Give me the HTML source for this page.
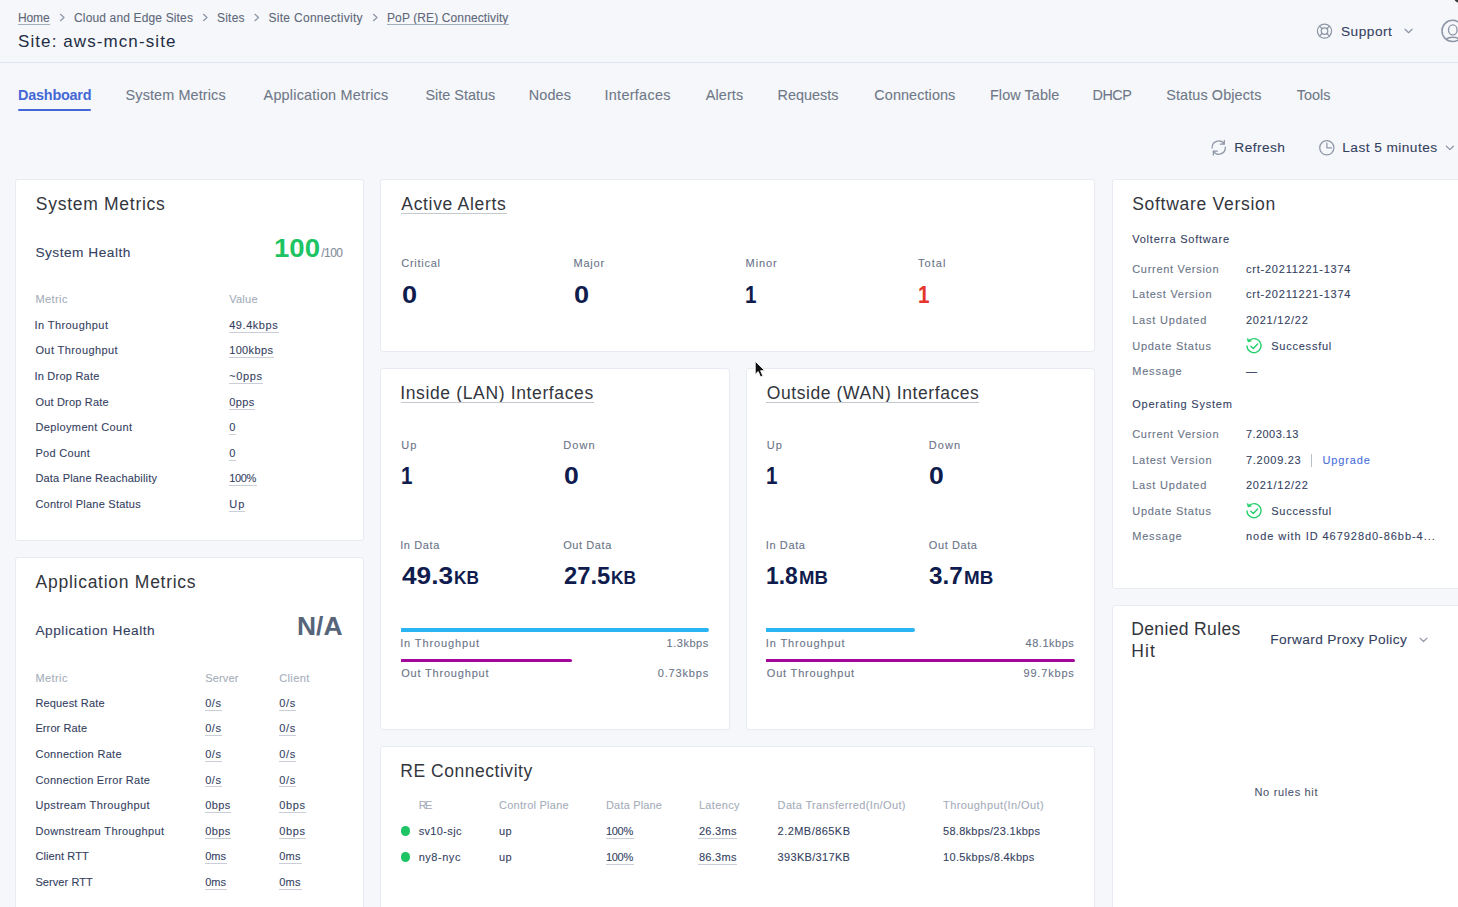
<!DOCTYPE html>
<html lang="en"><head><meta charset="utf-8"><title>Site: aws-mcn-site</title>
<style>
html,body{margin:0;padding:0;}
body{width:1458px;height:907px;overflow:hidden;background:#f5f7fa;font-family:"Liberation Sans",Arial,sans-serif;}
#root{position:relative;width:1458px;height:907px;overflow:hidden;}
.t{position:absolute;white-space:pre;line-height:1;}
.u{position:absolute;height:1px;display:block;}
.card{position:absolute;background:#fff;border:1px solid #e8ebf1;border-radius:3px;box-sizing:border-box;}
.bar{position:absolute;height:3.6px;border-radius:0.5px 2px 2px 0.5px;}
.dot{position:absolute;width:9.6px;height:9.6px;border-radius:50%;background:#1dc463;}
svg{position:absolute;overflow:visible;}
.k{-webkit-text-stroke:0.1px currentColor;}

</style></head>
<body>
<div id="root">
<div style="position:absolute;left:0;top:62px;width:1458px;height:1px;background:#dfe5ee"></div>
<div style="position:absolute;left:18px;top:109px;width:73px;height:2px;background:#4367d6;border-radius:1px"></div>
<div class="card" style="left:15px;top:179px;width:349px;height:362px"></div>
<div class="card" style="left:15px;top:557px;width:349px;height:380px"></div>
<div class="card" style="left:380px;top:179px;width:715px;height:173px"></div>
<div class="card" style="left:380px;top:368px;width:350px;height:362px"></div>
<div class="card" style="left:746px;top:368px;width:349px;height:362px"></div>
<div class="card" style="left:380px;top:746px;width:715px;height:200px"></div>
<div class="card" style="left:1112px;top:179px;width:380px;height:410px"></div>
<div class="card" style="left:1112px;top:605px;width:380px;height:340px"></div>
<div class="bar" style="left:400.8px;top:628.2px;width:308.4px;background:#2ab4f4"></div>
<div class="bar" style="left:400.8px;top:658.7px;width:171.6px;background:#a3069c"></div>
<div class="bar" style="left:766.4px;top:628.2px;width:148.8px;background:#2ab4f4"></div>
<div class="bar" style="left:766.4px;top:658.7px;width:308.4px;background:#a3069c"></div>
<div class="dot" style="left:400.8px;top:826.3px"></div>
<div class="dot" style="left:400.8px;top:852.2px"></div>
<div style="position:absolute;left:1310.5px;top:454px;width:1px;height:13px;background:#b9c0cc"></div>
<!-- breadcrumb chevrons -->
<svg style="left:0;top:0" width="1458" height="180" viewBox="0 0 1458 180" fill="none" stroke="#8e97a7" stroke-width="1.25" stroke-linecap="round" stroke-linejoin="round">
<path d="M60.5 14.3l3.5 3.2-3.5 3.2M203.5 14.3l3.5 3.2-3.5 3.2M255 14.3l3.5 3.2-3.5 3.2M373.5 14.3l3.5 3.2-3.5 3.2"/>
<!-- support lifebuoy -->
<circle cx="1324.5" cy="31.1" r="7.1"/><circle cx="1324.5" cy="31.1" r="3.3"/>
<path d="M1319.5 26.1l2.6 2.6M1329.5 26.1l-2.6 2.6M1319.5 36.1l2.6-2.6M1329.5 36.1l-2.6-2.6"/>
<path d="M1405.1 29.3l3.5 3.4 3.5-3.4"/>
<!-- user -->
<circle cx="1452.6" cy="30.9" r="10.6" stroke-width="1.5"/>
<ellipse cx="1452.8" cy="29.9" rx="4.3" ry="5" stroke-width="1.4"/>
<path d="M1446.6 39.4c0.9-1.4 3.2-2.1 6.2-2.1s5.300 0.700 6.200 2.100" stroke-width="1.4"/>
<!-- refresh -->
<path d="M1212.1 148A6.6 6.6 0 0 1 1224.2 144M1224.3 140.3V144.2H1220.3M1225.3 147.2A6.6 6.6 0 0 1 1213.2 151.2M1213.3 155.1V151H1217.4"/>
<!-- clock -->
<circle cx="1326.8" cy="147.8" r="7.1"/>
<path d="M1326.9 143.2v4.7h4.6"/>
<path d="M1446.4 146.2l3.5 3.4 3.5-3.4"/>
</svg>
<!-- denied rules chevron -->
<svg style="left:1415px;top:632px" width="18" height="16" viewBox="0 0 18 16" fill="none" stroke="#8e97a7" stroke-width="1.25" stroke-linecap="round" stroke-linejoin="round"><path d="M5 6.1l3.5 3.4 3.5-3.4"/></svg>
<!-- success icons -->
<svg style="left:1243.7px;top:335.6px" width="20" height="20" viewBox="0 0 20 20" fill="none" stroke="#27cf6e" stroke-width="1.4" stroke-linecap="round" stroke-linejoin="round"><path d="M4.6 5.2A7 7 0 1 1 3 9.9"/><path d="M3.3 2.9l0.9 3 2.9-0.9z" fill="#27cf6e" stroke-width="0.8"/><path d="M6.8 10.2l2.5 2.4 4.3-4.6"/></svg>
<svg style="left:1243.7px;top:500.7px" width="20" height="20" viewBox="0 0 20 20" fill="none" stroke="#27cf6e" stroke-width="1.4" stroke-linecap="round" stroke-linejoin="round"><path d="M4.6 5.2A7 7 0 1 1 3 9.9"/><path d="M3.3 2.9l0.9 3 2.9-0.9z" fill="#27cf6e" stroke-width="0.8"/><path d="M6.8 10.2l2.5 2.4 4.3-4.6"/></svg>
<!-- cursor -->
<svg style="left:754px;top:360px" width="14" height="20" viewBox="0 0 14 20"><path d="M1.2 1.2v13.2l3-2.8 2.3 5.3 2.4-1-2.3-5.2h4.2z" fill="#111" stroke="#fff" stroke-width="0.9" stroke-linejoin="round"/></svg>
<div style="position:absolute;left:1453.5px;top:-3.5px;width:7px;height:5px;background:#3a3a3a;border-radius:50%;transform:rotate(40deg)"></div>

<span class="t k" style="left:18.0px;top:12px;font-size:12px;color:#5f6879;letter-spacing:-0.11px;">Home</span>
<i class="u" style="left:18.0px;top:24.0px;width:32.0px;height:1.3px;background:#a4adbc"></i>
<span class="t k" style="left:74.0px;top:12px;font-size:12px;color:#5f6879;letter-spacing:0.15px;">Cloud and Edge Sites</span>
<span class="t k" style="left:217.0px;top:12px;font-size:12px;color:#5f6879;letter-spacing:0.21px;">Sites</span>
<span class="t k" style="left:268.5px;top:12px;font-size:12px;color:#5f6879;letter-spacing:0.29px;">Site Connectivity</span>
<span class="t k" style="left:387.0px;top:12px;font-size:12px;color:#5f6879;letter-spacing:0.11px;">PoP (RE) Connectivity</span>
<i class="u" style="left:387.0px;top:24.0px;width:121.5px;height:1.3px;background:#a4adbc"></i>
<span class="t" style="left:18.0px;top:33px;font-size:17px;color:#232c45;letter-spacing:1.09px;">Site: aws-mcn-site</span>
<span class="t k" style="left:1340.9px;top:25px;font-size:13.7px;color:#353f5f;letter-spacing:0.51px;">Support</span>
<span class="t" style="left:18.0px;top:88px;font-size:14.4px;color:#4367d6;font-weight:700;letter-spacing:-0.20px;">Dashboard</span>
<span class="t k" style="left:125.6px;top:88px;font-size:14.4px;color:#6f7888;letter-spacing:0.13px;">System Metrics</span>
<span class="t k" style="left:263.6px;top:88px;font-size:14.4px;color:#6f7888;letter-spacing:0.21px;">Application Metrics</span>
<span class="t k" style="left:425.4px;top:88px;font-size:14.4px;color:#6f7888;letter-spacing:0.02px;">Site Status</span>
<span class="t k" style="left:528.7px;top:88px;font-size:14.4px;color:#6f7888;letter-spacing:0.15px;">Nodes</span>
<span class="t k" style="left:604.5px;top:88px;font-size:14.4px;color:#6f7888;letter-spacing:0.30px;">Interfaces</span>
<span class="t k" style="left:705.8px;top:88px;font-size:14.4px;color:#6f7888;letter-spacing:0.12px;">Alerts</span>
<span class="t k" style="left:777.6px;top:88px;font-size:14.4px;color:#6f7888;">Requests</span>
<span class="t k" style="left:874.3px;top:88px;font-size:14.4px;color:#6f7888;letter-spacing:0.10px;">Connections</span>
<span class="t k" style="left:990.0px;top:88px;font-size:14.4px;color:#6f7888;letter-spacing:0.08px;">Flow Table</span>
<span class="t k" style="left:1092.5px;top:88px;font-size:14.4px;color:#6f7888;letter-spacing:-0.46px;">DHCP</span>
<span class="t k" style="left:1166.2px;top:88px;font-size:14.4px;color:#6f7888;letter-spacing:0.12px;">Status Objects</span>
<span class="t k" style="left:1296.7px;top:88px;font-size:14.4px;color:#6f7888;letter-spacing:0.03px;">Tools</span>
<span class="t k" style="left:1234.3px;top:141px;font-size:13.7px;color:#353f5f;letter-spacing:0.45px;">Refresh</span>
<span class="t k" style="left:1342.3px;top:141px;font-size:13.7px;color:#353f5f;letter-spacing:0.44px;">Last 5 minutes</span>
<span class="t" style="left:35.8px;top:196px;font-size:17.5px;color:#33363d;letter-spacing:0.72px;">System Metrics</span>
<span class="t k" style="left:35.4px;top:246px;font-size:13.7px;color:#353f5f;letter-spacing:0.50px;">System Health</span>
<span class="t" style="left:273.9px;top:235px;font-size:26px;color:#1dc463;font-weight:700;transform:scaleX(1.059);transform-origin:0 0;">100</span>
<span class="t k" style="left:321.2px;top:247px;font-size:12px;color:#868c9a;letter-spacing:-0.53px;">/100</span>
<span class="t k" style="left:35.4px;top:294px;font-size:11px;color:#a5adba;letter-spacing:0.41px;">Metric</span>
<span class="t k" style="left:229.2px;top:294px;font-size:11px;color:#a5adba;letter-spacing:0.25px;">Value</span>
<span class="t k" style="left:34.4px;top:320px;font-size:11px;color:#353f5f;letter-spacing:0.44px;">In Throughput</span>
<span class="t k" style="left:229.2px;top:320px;font-size:11px;color:#353f5f;letter-spacing:0.55px;">49.4kbps</span>
<i class="u" style="left:228.7px;top:331.7px;width:50.0px;background:#c9ced8"></i>
<span class="t k" style="left:35.4px;top:345px;font-size:11px;color:#353f5f;letter-spacing:0.41px;">Out Throughput</span>
<span class="t k" style="left:229.2px;top:345px;font-size:11px;color:#353f5f;letter-spacing:0.35px;">100kbps</span>
<i class="u" style="left:228.7px;top:357.3px;width:45.2px;background:#c9ced8"></i>
<span class="t k" style="left:34.4px;top:371px;font-size:11px;color:#353f5f;letter-spacing:0.24px;">In Drop Rate</span>
<span class="t k" style="left:229.2px;top:371px;font-size:11px;color:#353f5f;letter-spacing:0.63px;">~0pps</span>
<i class="u" style="left:228.7px;top:382.9px;width:34.3px;background:#c9ced8"></i>
<span class="t k" style="left:35.4px;top:397px;font-size:11px;color:#353f5f;letter-spacing:0.19px;">Out Drop Rate</span>
<span class="t k" style="left:229.2px;top:397px;font-size:11px;color:#353f5f;letter-spacing:0.42px;">0pps</span>
<i class="u" style="left:228.7px;top:408.5px;width:26.6px;background:#c9ced8"></i>
<span class="t k" style="left:35.4px;top:422px;font-size:11px;color:#353f5f;letter-spacing:0.37px;">Deployment Count</span>
<span class="t k" style="left:229.2px;top:422px;font-size:11px;color:#353f5f;">0</span>
<i class="u" style="left:228.7px;top:434.1px;width:7.7px;background:#c9ced8"></i>
<span class="t k" style="left:35.4px;top:448px;font-size:11px;color:#353f5f;letter-spacing:0.30px;">Pod Count</span>
<span class="t k" style="left:229.2px;top:448px;font-size:11px;color:#353f5f;">0</span>
<i class="u" style="left:228.7px;top:459.7px;width:7.7px;background:#c9ced8"></i>
<span class="t k" style="left:35.4px;top:473px;font-size:11px;color:#353f5f;letter-spacing:0.19px;">Data Plane Reachability</span>
<span class="t k" style="left:229.2px;top:473px;font-size:11px;color:#353f5f;letter-spacing:-0.38px;">100%</span>
<i class="u" style="left:228.7px;top:485.3px;width:28.2px;background:#c9ced8"></i>
<span class="t k" style="left:35.4px;top:499px;font-size:11px;color:#353f5f;letter-spacing:0.23px;">Control Plane Status</span>
<span class="t k" style="left:229.2px;top:499px;font-size:11px;color:#353f5f;letter-spacing:1.06px;">Up</span>
<i class="u" style="left:228.7px;top:510.9px;width:16.0px;background:#c9ced8"></i>
<span class="t" style="left:35.6px;top:574px;font-size:17.5px;color:#33363d;letter-spacing:0.73px;">Application Metrics</span>
<span class="t k" style="left:35.4px;top:624px;font-size:13.7px;color:#353f5f;letter-spacing:0.53px;">Application Health</span>
<span class="t" style="left:297.3px;top:614px;font-size:25px;color:#57657a;font-weight:700;transform:scaleX(1.057);transform-origin:0 0;">N/A</span>
<span class="t k" style="left:35.4px;top:673px;font-size:11px;color:#a5adba;letter-spacing:0.41px;">Metric</span>
<span class="t k" style="left:205.2px;top:673px;font-size:11px;color:#a5adba;letter-spacing:0.17px;">Server</span>
<span class="t k" style="left:279.2px;top:673px;font-size:11px;color:#a5adba;letter-spacing:0.39px;">Client</span>
<span class="t k" style="left:35.4px;top:698px;font-size:11px;color:#353f5f;letter-spacing:0.17px;">Request Rate</span>
<span class="t k" style="left:205.2px;top:698px;font-size:11px;color:#353f5f;letter-spacing:0.51px;">0/s</span>
<i class="u" style="left:204.7px;top:709.6px;width:17.2px;background:#c9ced8"></i>
<span class="t k" style="left:279.2px;top:698px;font-size:11px;color:#353f5f;letter-spacing:0.71px;">0/s</span>
<i class="u" style="left:278.7px;top:709.6px;width:17.6px;background:#c9ced8"></i>
<span class="t k" style="left:35.4px;top:723px;font-size:11px;color:#353f5f;letter-spacing:0.11px;">Error Rate</span>
<span class="t k" style="left:205.2px;top:723px;font-size:11px;color:#353f5f;letter-spacing:0.51px;">0/s</span>
<i class="u" style="left:204.7px;top:735.2px;width:17.2px;background:#c9ced8"></i>
<span class="t k" style="left:279.2px;top:723px;font-size:11px;color:#353f5f;letter-spacing:0.71px;">0/s</span>
<i class="u" style="left:278.7px;top:735.2px;width:17.6px;background:#c9ced8"></i>
<span class="t k" style="left:35.4px;top:749px;font-size:11px;color:#353f5f;letter-spacing:0.30px;">Connection Rate</span>
<span class="t k" style="left:205.2px;top:749px;font-size:11px;color:#353f5f;letter-spacing:0.51px;">0/s</span>
<i class="u" style="left:204.7px;top:760.8px;width:17.2px;background:#c9ced8"></i>
<span class="t k" style="left:279.2px;top:749px;font-size:11px;color:#353f5f;letter-spacing:0.71px;">0/s</span>
<i class="u" style="left:278.7px;top:760.8px;width:17.6px;background:#c9ced8"></i>
<span class="t k" style="left:35.4px;top:775px;font-size:11px;color:#353f5f;letter-spacing:0.25px;">Connection Error Rate</span>
<span class="t k" style="left:205.2px;top:775px;font-size:11px;color:#353f5f;letter-spacing:0.51px;">0/s</span>
<i class="u" style="left:204.7px;top:786.4px;width:17.2px;background:#c9ced8"></i>
<span class="t k" style="left:279.2px;top:775px;font-size:11px;color:#353f5f;letter-spacing:0.71px;">0/s</span>
<i class="u" style="left:278.7px;top:786.4px;width:17.6px;background:#c9ced8"></i>
<span class="t k" style="left:35.4px;top:800px;font-size:11px;color:#353f5f;letter-spacing:0.41px;">Upstream Throughput</span>
<span class="t k" style="left:205.2px;top:800px;font-size:11px;color:#353f5f;letter-spacing:0.38px;">0bps</span>
<i class="u" style="left:204.7px;top:812.0px;width:26.5px;background:#c9ced8"></i>
<span class="t k" style="left:279.2px;top:800px;font-size:11px;color:#353f5f;letter-spacing:0.65px;">0bps</span>
<i class="u" style="left:278.7px;top:812.0px;width:27.3px;background:#c9ced8"></i>
<span class="t k" style="left:35.4px;top:826px;font-size:11px;color:#353f5f;letter-spacing:0.39px;">Downstream Throughput</span>
<span class="t k" style="left:205.2px;top:826px;font-size:11px;color:#353f5f;letter-spacing:0.38px;">0bps</span>
<i class="u" style="left:204.7px;top:837.6px;width:26.5px;background:#c9ced8"></i>
<span class="t k" style="left:279.2px;top:826px;font-size:11px;color:#353f5f;letter-spacing:0.65px;">0bps</span>
<i class="u" style="left:278.7px;top:837.6px;width:27.3px;background:#c9ced8"></i>
<span class="t k" style="left:35.4px;top:851px;font-size:11px;color:#353f5f;letter-spacing:0.11px;">Client RTT</span>
<span class="t k" style="left:205.2px;top:851px;font-size:11px;color:#353f5f;letter-spacing:0.06px;">0ms</span>
<i class="u" style="left:204.7px;top:863.2px;width:22.4px;background:#c9ced8"></i>
<span class="t k" style="left:279.2px;top:851px;font-size:11px;color:#353f5f;letter-spacing:0.31px;">0ms</span>
<i class="u" style="left:278.7px;top:863.2px;width:22.9px;background:#c9ced8"></i>
<span class="t k" style="left:35.4px;top:877px;font-size:11px;color:#353f5f;letter-spacing:0.09px;">Server RTT</span>
<span class="t k" style="left:205.2px;top:877px;font-size:11px;color:#353f5f;letter-spacing:0.06px;">0ms</span>
<i class="u" style="left:204.7px;top:888.8px;width:22.4px;background:#c9ced8"></i>
<span class="t k" style="left:279.2px;top:877px;font-size:11px;color:#353f5f;letter-spacing:0.31px;">0ms</span>
<i class="u" style="left:278.7px;top:888.8px;width:22.9px;background:#c9ced8"></i>
<span class="t" style="left:401.3px;top:196px;font-size:17.5px;color:#33363d;letter-spacing:0.68px;">Active Alerts</span>
<i class="u" style="left:400.8px;top:213.0px;width:106.7px;background:#c4c8cf"></i>
<span class="t k" style="left:401.3px;top:258px;font-size:11px;color:#6a7487;letter-spacing:0.72px;">Critical</span>
<span class="t k" style="left:573.5px;top:258px;font-size:11px;color:#6a7487;letter-spacing:0.79px;">Major</span>
<span class="t k" style="left:745.6px;top:258px;font-size:11px;color:#6a7487;letter-spacing:0.89px;">Minor</span>
<span class="t k" style="left:918.1px;top:258px;font-size:11px;color:#6a7487;letter-spacing:1.03px;">Total</span>
<span class="t" style="left:401.8px;top:283px;font-size:24px;color:#0f1c4d;font-weight:700;transform:scaleX(1.131);transform-origin:0 0;">0</span>
<span class="t" style="left:574.0px;top:283px;font-size:24px;color:#0f1c4d;font-weight:700;transform:scaleX(1.131);transform-origin:0 0;">0</span>
<span class="t" style="left:745.3px;top:283px;font-size:24px;color:#0f1c4d;font-weight:700;transform:scaleX(0.860);transform-origin:0 0;">1</span>
<span class="t" style="left:917.8px;top:283px;font-size:24px;color:#e5352c;font-weight:700;transform:scaleX(0.860);transform-origin:0 0;">1</span>
<span class="t" style="left:400.2px;top:385px;font-size:17.5px;color:#33363d;letter-spacing:0.64px;">Inside (LAN) Interfaces</span>
<i class="u" style="left:400.7px;top:402.1px;width:193.4px;background:#c4c8cf"></i>
<span class="t k" style="left:401.2px;top:440px;font-size:11px;color:#6a7487;letter-spacing:1.06px;">Up</span>
<span class="t k" style="left:563.2px;top:440px;font-size:11px;color:#6a7487;letter-spacing:1.10px;">Down</span>
<span class="t" style="left:400.7px;top:464px;font-size:24px;color:#0f1c4d;font-weight:700;transform:scaleX(0.860);transform-origin:0 0;">1</span>
<span class="t" style="left:563.7px;top:464px;font-size:24px;color:#0f1c4d;font-weight:700;transform:scaleX(1.108);transform-origin:0 0;">0</span>
<span class="t k" style="left:400.2px;top:540px;font-size:11px;color:#6a7487;letter-spacing:0.61px;">In Data</span>
<span class="t k" style="left:563.2px;top:540px;font-size:11px;color:#6a7487;letter-spacing:0.59px;">Out Data</span>
<span class="t" style="left:401.7px;top:564px;font-size:24px;color:#0f1c4d;font-weight:700;transform:scaleX(1.094);transform-origin:0 0;">49.3</span>
<span class="t" style="left:453.7px;top:569px;font-size:18px;color:#0f1c4d;font-weight:700;transform:scaleX(0.956);transform-origin:0 0;">KB</span>
<span class="t" style="left:563.8px;top:564px;font-size:24px;color:#0f1c4d;font-weight:700;transform:scaleX(0.990);transform-origin:0 0;">27.5</span>
<span class="t" style="left:610.7px;top:569px;font-size:18px;color:#0f1c4d;font-weight:700;transform:scaleX(0.960);transform-origin:0 0;">KB</span>
<span class="t k" style="left:400.2px;top:638px;font-size:11px;color:#6a7487;letter-spacing:0.88px;">In Throughput</span>
<span class="t k" style="left:401.2px;top:668px;font-size:11px;color:#6a7487;letter-spacing:0.81px;">Out Throughput</span>
<span class="t k" style="left:666.6px;top:638px;font-size:11px;color:#6a7487;letter-spacing:0.51px;">1.3kbps</span>
<span class="t k" style="left:657.7px;top:668px;font-size:11px;color:#6a7487;letter-spacing:0.84px;">0.73kbps</span>
<span class="t" style="left:766.8px;top:385px;font-size:17.5px;color:#33363d;letter-spacing:0.58px;">Outside (WAN) Interfaces</span>
<i class="u" style="left:766.3px;top:402.1px;width:213.2px;background:#c4c8cf"></i>
<span class="t k" style="left:766.8px;top:440px;font-size:11px;color:#6a7487;letter-spacing:1.06px;">Up</span>
<span class="t k" style="left:928.8px;top:440px;font-size:11px;color:#6a7487;letter-spacing:1.10px;">Down</span>
<span class="t" style="left:766.3px;top:464px;font-size:24px;color:#0f1c4d;font-weight:700;transform:scaleX(0.860);transform-origin:0 0;">1</span>
<span class="t" style="left:929.3px;top:464px;font-size:24px;color:#0f1c4d;font-weight:700;transform:scaleX(1.108);transform-origin:0 0;">0</span>
<span class="t k" style="left:765.8px;top:540px;font-size:11px;color:#6a7487;letter-spacing:0.61px;">In Data</span>
<span class="t k" style="left:928.8px;top:540px;font-size:11px;color:#6a7487;letter-spacing:0.59px;">Out Data</span>
<span class="t" style="left:766.3px;top:564px;font-size:24px;color:#0f1c4d;font-weight:700;transform:scaleX(0.953);transform-origin:0 0;">1.8</span>
<span class="t" style="left:799.1px;top:569px;font-size:18px;color:#0f1c4d;font-weight:700;transform:scaleX(1.030);transform-origin:0 0;">MB</span>
<span class="t" style="left:929.4px;top:564px;font-size:24px;color:#0f1c4d;font-weight:700;transform:scaleX(1.012);transform-origin:0 0;">3.7</span>
<span class="t" style="left:963.8px;top:569px;font-size:18px;color:#0f1c4d;font-weight:700;transform:scaleX(1.045);transform-origin:0 0;">MB</span>
<span class="t k" style="left:765.8px;top:638px;font-size:11px;color:#6a7487;letter-spacing:0.88px;">In Throughput</span>
<span class="t k" style="left:766.8px;top:668px;font-size:11px;color:#6a7487;letter-spacing:0.81px;">Out Throughput</span>
<span class="t k" style="left:1025.6px;top:638px;font-size:11px;color:#6a7487;letter-spacing:0.51px;">48.1kbps</span>
<span class="t k" style="left:1023.5px;top:668px;font-size:11px;color:#6a7487;letter-spacing:0.81px;">99.7kbps</span>
<span class="t" style="left:400.3px;top:763px;font-size:17.5px;color:#33363d;letter-spacing:0.53px;">RE Connectivity</span>
<span class="t k" style="left:418.7px;top:800px;font-size:11px;color:#a5adba;letter-spacing:-1.64px;">RE</span>
<span class="t k" style="left:499.0px;top:800px;font-size:11px;color:#a5adba;letter-spacing:0.25px;">Control Plane</span>
<span class="t k" style="left:606.0px;top:800px;font-size:11px;color:#a5adba;letter-spacing:0.17px;">Data Plane</span>
<span class="t k" style="left:698.9px;top:800px;font-size:11px;color:#a5adba;letter-spacing:0.35px;">Latency</span>
<span class="t k" style="left:777.6px;top:800px;font-size:11px;color:#a5adba;letter-spacing:0.35px;">Data Transferred(In/Out)</span>
<span class="t k" style="left:943.0px;top:800px;font-size:11px;color:#a5adba;letter-spacing:0.42px;">Throughput(In/Out)</span>
<span class="t k" style="left:418.7px;top:826px;font-size:11px;color:#353f5f;letter-spacing:0.34px;">sv10-sjc</span>
<span class="t k" style="left:499.0px;top:826px;font-size:11px;color:#353f5f;letter-spacing:0.48px;">up</span>
<span class="t k" style="left:606.0px;top:826px;font-size:11px;color:#353f5f;letter-spacing:-0.32px;">100%</span>
<i class="u" style="left:605.5px;top:837.9px;width:28.4px;background:#c9ced8"></i>
<span class="t k" style="left:698.9px;top:826px;font-size:11px;color:#353f5f;letter-spacing:0.31px;">26.3ms</span>
<i class="u" style="left:698.4px;top:837.9px;width:39.1px;background:#c9ced8"></i>
<span class="t k" style="left:777.6px;top:826px;font-size:11px;color:#353f5f;letter-spacing:0.45px;">2.2MB/865KB</span>
<span class="t k" style="left:943.0px;top:826px;font-size:11px;color:#353f5f;letter-spacing:0.29px;">58.8kbps/23.1kbps</span>
<span class="t k" style="left:418.7px;top:852px;font-size:11px;color:#353f5f;letter-spacing:0.53px;">ny8-nyc</span>
<span class="t k" style="left:499.0px;top:852px;font-size:11px;color:#353f5f;letter-spacing:0.48px;">up</span>
<span class="t k" style="left:606.0px;top:852px;font-size:11px;color:#353f5f;letter-spacing:-0.32px;">100%</span>
<i class="u" style="left:605.5px;top:863.8px;width:28.4px;background:#c9ced8"></i>
<span class="t k" style="left:698.9px;top:852px;font-size:11px;color:#353f5f;letter-spacing:0.31px;">86.3ms</span>
<i class="u" style="left:698.4px;top:863.8px;width:39.1px;background:#c9ced8"></i>
<span class="t k" style="left:777.6px;top:852px;font-size:11px;color:#353f5f;letter-spacing:0.32px;">393KB/317KB</span>
<span class="t k" style="left:943.0px;top:852px;font-size:11px;color:#353f5f;letter-spacing:0.34px;">10.5kbps/8.4kbps</span>
<span class="t" style="left:1132.2px;top:196px;font-size:17.5px;color:#33363d;letter-spacing:0.72px;">Software Version</span>
<span class="t k" style="left:1132.2px;top:234px;font-size:11px;color:#353f5f;letter-spacing:0.78px;">Volterra Software</span>
<span class="t k" style="left:1132.2px;top:399px;font-size:11px;color:#353f5f;letter-spacing:0.78px;">Operating System</span>
<span class="t k" style="left:1132.2px;top:264px;font-size:11px;color:#6a7487;letter-spacing:0.71px;">Current Version</span>
<span class="t k" style="left:1132.2px;top:289px;font-size:11px;color:#6a7487;letter-spacing:0.74px;">Latest Version</span>
<span class="t k" style="left:1132.2px;top:315px;font-size:11px;color:#6a7487;letter-spacing:0.79px;">Last Updated</span>
<span class="t k" style="left:1132.2px;top:341px;font-size:11px;color:#6a7487;letter-spacing:0.75px;">Update Status</span>
<span class="t k" style="left:1132.2px;top:366px;font-size:11px;color:#6a7487;letter-spacing:0.81px;">Message</span>
<span class="t k" style="left:1132.2px;top:429px;font-size:11px;color:#6a7487;letter-spacing:0.71px;">Current Version</span>
<span class="t k" style="left:1132.2px;top:455px;font-size:11px;color:#6a7487;letter-spacing:0.74px;">Latest Version</span>
<span class="t k" style="left:1132.2px;top:480px;font-size:11px;color:#6a7487;letter-spacing:0.79px;">Last Updated</span>
<span class="t k" style="left:1132.2px;top:506px;font-size:11px;color:#6a7487;letter-spacing:0.75px;">Update Status</span>
<span class="t k" style="left:1132.2px;top:531px;font-size:11px;color:#6a7487;letter-spacing:0.81px;">Message</span>
<span class="t k" style="left:1246.0px;top:264px;font-size:11px;color:#353f5f;letter-spacing:0.77px;">crt-20211221-1374</span>
<span class="t k" style="left:1246.0px;top:289px;font-size:11px;color:#353f5f;letter-spacing:0.77px;">crt-20211221-1374</span>
<span class="t k" style="left:1246.0px;top:315px;font-size:11px;color:#353f5f;letter-spacing:0.75px;">2021/12/22</span>
<span class="t k" style="left:1271.2px;top:341px;font-size:11px;color:#353f5f;letter-spacing:0.77px;">Successful</span>
<span class="t k" style="left:1246.0px;top:366px;font-size:11px;color:#353f5f;">—</span>
<span class="t k" style="left:1246.0px;top:429px;font-size:11px;color:#353f5f;letter-spacing:0.42px;">7.2003.13</span>
<span class="t k" style="left:1246.0px;top:455px;font-size:11px;color:#353f5f;letter-spacing:0.72px;">7.2009.23</span>
<span class="t k" style="left:1322.4px;top:455px;font-size:11px;color:#4a6fdc;letter-spacing:0.89px;">Upgrade</span>
<span class="t k" style="left:1246.0px;top:480px;font-size:11px;color:#353f5f;letter-spacing:0.75px;">2021/12/22</span>
<span class="t k" style="left:1271.2px;top:506px;font-size:11px;color:#353f5f;letter-spacing:0.77px;">Successful</span>
<span class="t k" style="left:1246.0px;top:531px;font-size:11px;color:#353f5f;letter-spacing:0.95px;">node with ID 467928d0-86bb-4...</span>
<span class="t" style="left:1131.2px;top:621px;font-size:17.5px;color:#33363d;letter-spacing:0.37px;">Denied Rules</span>
<span class="t" style="left:1131.2px;top:643px;font-size:17.5px;color:#33363d;letter-spacing:1.09px;">Hit</span>
<span class="t k" style="left:1270.3px;top:633px;font-size:13.7px;color:#353f5f;letter-spacing:0.38px;">Forward Proxy Policy</span>
<span class="t k" style="left:1254.5px;top:787px;font-size:11px;color:#4c566e;letter-spacing:0.67px;">No rules hit</span>
</div>
</body></html>
